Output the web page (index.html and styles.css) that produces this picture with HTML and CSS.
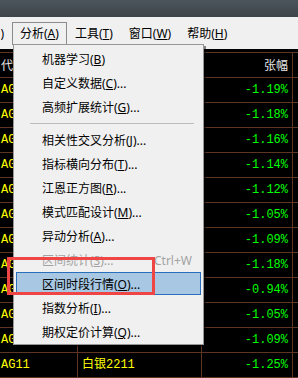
FILE: index.html
```
<!DOCTYPE html>
<html lang="zh-CN">
<head>
    <meta charset="UTF-8">
    <meta name="viewport" content="width=device-width, initial-scale=1.0">
    <title>分析菜单</title>
    <link rel="stylesheet" href="styles.css">
</head>
<body>
    <div class="titlebar"></div>

    <div class="menubar">
        <span class="menubar-item clipped"><span>画面(<u>V</u>)</span></span>
        <span class="menubar-item active">分析(<u>A</u>)</span>
        <span class="menubar-item">工具(<u>T</u>)</span>
        <span class="menubar-item">窗口(<u>W</u>)</span>
        <span class="menubar-item">帮助(<u>H</u>)</span>
    </div>

    <div class="quotes">
        <div class="row head">
            <div class="cell code">代码</div>
            <div class="cell name">名称</div>
            <div class="cell num">张幅</div>
            <div class="cell"></div>
        </div>
        <div class="row"><div class="cell code">AG12</div><div class="cell name">白银2212</div><div class="cell num">-1.19%</div><div class="cell"></div></div>
        <div class="row"><div class="cell code">AG01</div><div class="cell name">白银2301</div><div class="cell num">-1.18%</div><div class="cell"></div></div>
        <div class="row"><div class="cell code">AG02</div><div class="cell name">白银2302</div><div class="cell num">-1.16%</div><div class="cell"></div></div>
        <div class="row"><div class="cell code">AG03</div><div class="cell name">白银2303</div><div class="cell num">-1.14%</div><div class="cell"></div></div>
        <div class="row"><div class="cell code">AG04</div><div class="cell name">白银2304</div><div class="cell num">-1.12%</div><div class="cell"></div></div>
        <div class="row"><div class="cell code">AG05</div><div class="cell name">白银2305</div><div class="cell num">-1.05%</div><div class="cell"></div></div>
        <div class="row"><div class="cell code">AG06</div><div class="cell name">白银2306</div><div class="cell num">-1.09%</div><div class="cell"></div></div>
        <div class="row"><div class="cell code">AG07</div><div class="cell name">白银2307</div><div class="cell num">-1.18%</div><div class="cell"></div></div>
        <div class="row"><div class="cell code">AG08</div><div class="cell name">白银2308</div><div class="cell num">-0.94%</div><div class="cell"></div></div>
        <div class="row"><div class="cell code">AG09</div><div class="cell name">白银2209</div><div class="cell num">-1.05%</div><div class="cell"></div></div>
        <div class="row"><div class="cell code">AG10</div><div class="cell name">白银2210</div><div class="cell num">-1.09%</div><div class="cell"></div></div>
        <div class="row"><div class="cell code">AG11</div><div class="cell name">白银2211</div><div class="cell num">-1.25%</div><div class="cell"></div></div>
    </div>

    <div class="dropdown">
        <div class="item"><span>机器学习(<u>B</u>)</span></div>
        <div class="item"><span>自定义数据(<u>C</u>)...</span></div>
        <div class="item"><span>高频扩展统计(<u>G</u>)...</span></div>
        <div class="separator"></div>
        <div class="item"><span>相关性交叉分析(<u>J</u>)...</span></div>
        <div class="item"><span>指标横向分布(<u>T</u>)...</span></div>
        <div class="item"><span>江恩正方图(<u>R</u>)...</span></div>
        <div class="item"><span>模式匹配设计(<u>M</u>)...</span></div>
        <div class="item"><span>异动分析(<u>A</u>)...</span></div>
        <div class="item disabled"><span>区间统计(<u>S</u>)...</span><span>Ctrl+W</span></div>
        <div class="item selected"><span>区间时段行情(<u>O</u>)...</span></div>
        <div class="item"><span>指数分析(<u>I</u>)...</span></div>
        <div class="item"><span>期权定价计算(<u>Q</u>)...</span></div>
    </div>

    <div class="callout"></div>
</body>
</html>
```

FILE: styles.css
```
body {
    margin: 0;
    width: 298px;
    height: 378px;
    overflow: hidden;
    background-color: #000000;
    font-family: "Noto Sans", "Noto Sans CJK SC", sans-serif;
    font-size: 12px;
    position: relative;
}
.titlebar {
    height: 17px;
    background: linear-gradient(#4b555c, #3d454a);
}
.menubar {
    height: 32px;
    background-color: #f0f0f0;
    display: flex;
    align-items: center;
    color: #000;
}
.menubar-item {
    height: 23px;
    line-height: 21px;
    padding: 0 7px;
    box-sizing: border-box;
    border: 1px solid transparent;
    white-space: nowrap;
}
.menubar-item.clipped {
    width: 12px;
    padding: 0 7px 0 0;
    display: flex;
    justify-content: flex-end;
    overflow: hidden;
    flex-shrink: 0;
}
.menubar-item.active {
    border-color: #8c8c8c;
    margin-left: 0;
}
u {
    text-decoration: underline;
    text-underline-offset: 1px;
}

/* quote table */
.quotes {
    padding-top: 3px;
    font-family: "Liberation Mono", "Noto Sans CJK SC", monospace;
    font-size: 12px;
}
.row {
    display: grid;
    grid-template-columns: 78px 124px 91px 1fr;
    height: 25px;
    border-bottom: 1px solid #5e3522;
    box-sizing: border-box;
}
.row.head {
    height: 26px;
    border-top: 1px solid #5e3522;
}
.cell {
    border-right: 1px solid #5e3522;
    box-sizing: border-box;
    line-height: 24px;
    padding: 0 4px;
    white-space: nowrap;
    overflow: hidden;
    color: #ffff00;
}
.cell.code {
    padding-left: 1px;
}
.cell.num {
    text-align: right;
    color: #00ff00;
}
.head .cell {
    color: #e6e6e6;
    font-family: "Noto Sans CJK SC", sans-serif;
}

/* dropdown menu */
.dropdown {
    position: absolute;
    left: 13px;
    top: 44px;
    width: 191px;
    padding-top: 2px;
    box-sizing: border-box;
    background-color: #f0f0f0;
    border: 1px solid #979797;
    box-shadow: 2px 2px 0 rgba(0, 0, 0, 0.45);
    color: #000;
}
.item {
    height: 24px;
    margin: 0 2px;
    padding: 0 8px 0 25px;
    border: 1px solid transparent;
    box-sizing: border-box;
    display: flex;
    justify-content: space-between;
    align-items: center;
    white-space: nowrap;
}
.item.disabled {
    color: #a3a3a3;
}
.item.selected {
    background-color: #a7c7e2;
    border-color: #2a6fbd;
    height: 23px;
    margin-bottom: 1px;
}
.separator {
    height: 9px;
    margin: 0 9px 0 16px;
    position: relative;
}
.separator::after {
    content: "";
    position: absolute;
    left: 0;
    right: 0;
    top: 4px;
    border-top: 1px solid #bcbcbc;
}

/* red annotation box */
.callout {
    position: absolute;
    left: 7px;
    top: 257px;
    width: 148px;
    height: 38px;
    box-sizing: border-box;
    border: 3px solid #ef4545;
}
```
